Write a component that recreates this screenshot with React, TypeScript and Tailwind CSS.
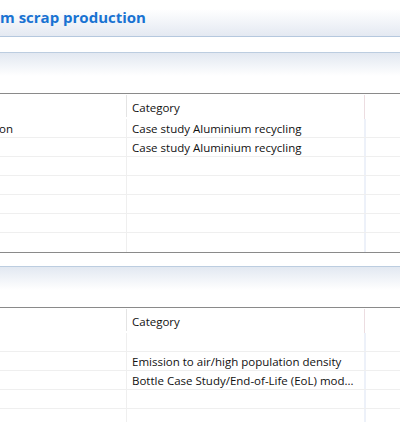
import React from 'react';

type Row = [string, string];

const font = { fontFamily: '"Open Sans", "Noto Sans", sans-serif' };

function SectionHeader() {
  return (
    <div className="border-t border-[#bccde0]">
      <div className="h-[23px] bg-linear-to-b from-[#e2e8f1] to-white" />
      <div className="h-[17px] bg-white" />
    </div>
  );
}

function DataTable({ rows }: { rows: Row[] }) {
  return (
    <div className="border-y border-[#8a8a8a]">
      {/* header */}
      <div className="flex h-[25px]">
        <div className="w-[126px]" />
        <div className="flex w-px items-stretch py-[1px] pb-[2px]">
          <div className="w-px bg-[#e4e4e4]" />
        </div>
        <div className="flex w-[237px] items-center pl-[5px] pt-[2px] text-[11.5px] text-[#111]">
          Category
        </div>
        <div className="flex w-px items-stretch pt-[1px]">
          <div className="w-px bg-[#ecdde1]" />
        </div>
        <div className="flex-1" />
      </div>
      {/* rows */}
      {rows.map((r, i) => (
        <div
          key={i}
          className={`flex h-[19px] ${i < rows.length - 1 ? 'border-b border-[#efefef]' : ''}`}
        >
          <div className="flex w-[126px] items-center overflow-hidden whitespace-nowrap pt-[2px] text-[11.5px] text-[#111]">
            <span className="-ml-[1px]">{r[0]}</span>
          </div>
          <div className="w-px bg-[#efefef]" />
          <div className="flex w-[237px] items-center overflow-hidden whitespace-nowrap pl-[5px] pt-[2px] text-[11.5px] text-[#111]">
            {r[1]}
          </div>
          <div className="w-[2px] bg-[#edf1f9]" />
          <div className="flex-1" />
        </div>
      ))}
    </div>
  );
}

export default function App() {
  const rows1: Row[] = [
    ['on', 'Case study Aluminium recycling'],
    ['', 'Case study Aluminium recycling'],
    ['', ''],
    ['', ''],
    ['', ''],
    ['', ''],
    ['', ''],
  ];
  const rows2: Row[] = [
    ['', ''],
    ['', 'Emission to air/high population density'],
    ['', 'Bottle Case Study/End-of-Life (EoL) mod...'],
    ['', ''],
    ['', ''],
  ];

  return (
    <div className="h-[422px] w-[400px] overflow-hidden bg-white" style={font}>
      {/* form title */}
      <div className="flex h-[37px] items-center border-b border-[#b5c8de] bg-linear-to-b from-white from-25% to-[#e4e9f2] pb-[1px]">
        <span className="whitespace-nowrap text-[15px] font-bold text-[#1872d2]">
          m scrap production
        </span>
      </div>
      <div className="h-[15px]" />

      <SectionHeader />
      <DataTable rows={rows1} />

      <div className="h-[13px]" />

      <SectionHeader />
      <DataTable rows={rows2} />
    </div>
  );
}
